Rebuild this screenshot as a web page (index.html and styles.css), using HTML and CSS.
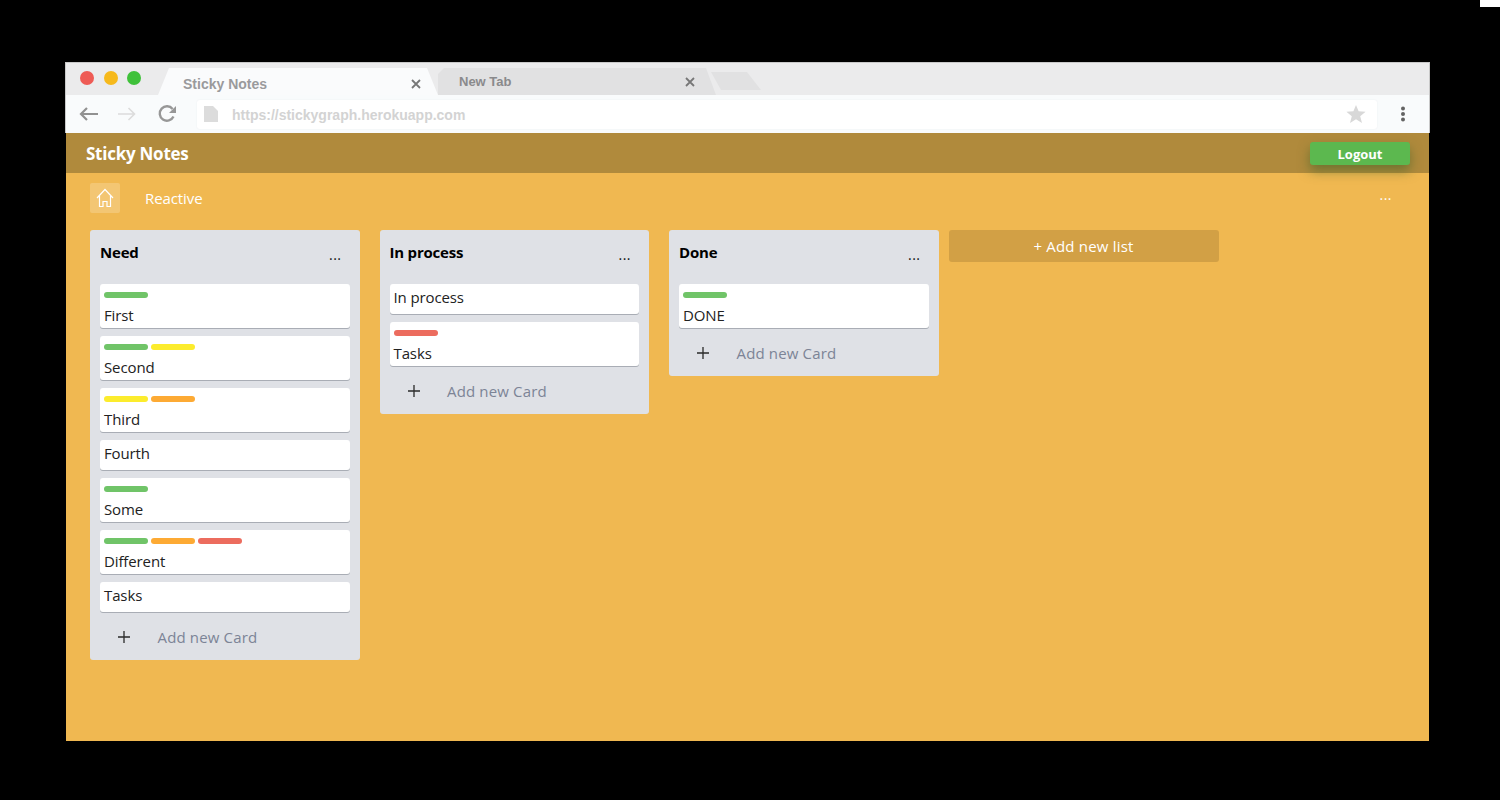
FILE: index.html
```html
<!DOCTYPE html>
<html lang="en">
<head>
<meta charset="utf-8">
<title>Sticky Notes</title>
<link rel="stylesheet" href="styles.css">
</head>
<body>
<div class="corner"></div>
<div class="window">
  <div class="tabstrip">
    <div class="lights"><i class="light red"></i><i class="light amber"></i><i class="light green"></i></div>
    <div class="tab tab-active"><span class="tab-title">Sticky Notes</span><svg class="tab-x" width="10" height="10" viewBox="0 0 10 10"><path d="M1 1l8 8M9 1l-8 8"/></svg></div>
    <div class="tab tab-idle"><span class="tab-title">New Tab</span><svg class="tab-x" width="10" height="10" viewBox="0 0 10 10"><path d="M1 1l8 8M9 1l-8 8"/></svg></div>
    <div class="tab-new"></div>
  </div>
  <div class="toolbar">
    <svg class="nav nav-back" width="20" height="16" viewBox="0 0 20 16"><path d="M19 8H2M8 2L2 8l6 6"/></svg>
    <svg class="nav nav-fwd" width="18" height="16" viewBox="0 0 18 16"><path d="M0 8h16.500M10.500 2l6 6-6 6"/></svg>
    <svg class="nav nav-reload" width="20" height="20" viewBox="0 0 20 20"><path d="M16.500 12.500A7.200 7.200 0 1 1 15.600 5"/><path class="fill" d="M19 2v7h-7z"/></svg>
    <div class="urlbar">
      <svg class="file" width="14" height="16" viewBox="0 0 14 16"><path d="M0 0h9l5 5v11H0z"/></svg>
      <span class="url">https://stickygraph.herokuapp.com</span>
      <svg class="star" width="20" height="18" viewBox="0 0 20 18"><path d="M10 0l2.600 6.300 7 .5-5.400 4.400 1.800 6.800L10 14.300l-6 3.700 1.800-6.800L.4 6.800l7-.5z"/></svg>
    </div>
    <svg class="kebab" width="6" height="16" viewBox="0 0 6 16"><circle cx="3" cy="2.500" r="2"/><circle cx="3" cy="8" r="2"/><circle cx="3" cy="13.500" r="2"/></svg>
  </div>
  <header class="appbar">
    <div class="brand">Sticky Notes</div>
    <button class="logout">Logout</button>
  </header>
  <main class="board">
    <div class="subbar">
      <div class="home"><svg width="18" height="20" viewBox="0 0 18 20"><path d="M1 10l8-8.500 8 8.500M3.500 8v10.500h3.500v-5h4v5h3.500V8"/></svg></div>
      <div class="board-name">Reactive</div>
      <div class="board-more">...</div>
    </div>
    <div class="columns">
      <section class="list">
        <div class="list-head"><h2>Need</h2><span class="more">...</span></div>
        <div class="card labeled"><div class="labels"><i class="lab g"></i></div><div class="txt">First</div></div>
        <div class="card labeled"><div class="labels"><i class="lab g"></i><i class="lab y"></i></div><div class="txt">Second</div></div>
        <div class="card labeled"><div class="labels"><i class="lab y"></i><i class="lab o"></i></div><div class="txt">Third</div></div>
        <div class="card"><div class="txt">Fourth</div></div>
        <div class="card labeled"><div class="labels"><i class="lab g"></i></div><div class="txt">Some</div></div>
        <div class="card labeled"><div class="labels"><i class="lab g"></i><i class="lab o"></i><i class="lab r"></i></div><div class="txt">Different</div></div>
        <div class="card"><div class="txt">Tasks</div></div>
        <div class="add-card"><svg width="14" height="14" viewBox="0 0 14 14"><path d="M7 1v12M1 7h12"/></svg><span>Add new Card</span></div>
      </section>
      <section class="list">
        <div class="list-head"><h2>In process</h2><span class="more">...</span></div>
        <div class="card"><div class="txt">In process</div></div>
        <div class="card labeled"><div class="labels"><i class="lab r"></i></div><div class="txt">Tasks</div></div>
        <div class="add-card"><svg width="14" height="14" viewBox="0 0 14 14"><path d="M7 1v12M1 7h12"/></svg><span>Add new Card</span></div>
      </section>
      <section class="list list-last">
        <div class="list-head"><h2>Done</h2><span class="more">...</span></div>
        <div class="card labeled"><div class="labels"><i class="lab g"></i></div><div class="txt">DONE</div></div>
        <div class="add-card"><svg width="14" height="14" viewBox="0 0 14 14"><path d="M7 1v12M1 7h12"/></svg><span>Add new Card</span></div>
      </section>
      <div class="add-list">+ Add new list</div>
    </div>
  </main>
</div>
</body>
</html>
```
FILE: styles.css
```css
* { box-sizing: border-box; }
html, body { margin: 0; height: 800px; overflow: hidden; }
body {
  background: #000;
  padding: 62px 70px 0 65px;
  font-family: "Open Sans", "Noto Sans", sans-serif;
  position: relative;
}
.corner { position: absolute; top: 0; right: 0; width: 20px; height: 7px; background: #fff; }
.window { width: 1365px; height: 679px; display: flex; flex-direction: column; }

.tabstrip {
  height: 33px;
  flex: none;
  display: flex;
  align-items: flex-end;
  background: #ebebec;
  border: 1px solid #c9c9c9;
  border-bottom: 0;
  position: relative;
}
.lights { display: flex; gap: 9.500px; width: 92px; height: 26px; padding: 1px 0 0 14px; flex: none; align-self: flex-start; margin-top: 7px; }
.light { width: 14px; height: 14px; border-radius: 50%; }
.red { background: #ee5b55; }
.amber { background: #f6b91c; }
.green { background: #3fc13a; }
.tab {
  height: 27px;
  display: flex;
  align-items: center;
  justify-content: space-between;
  flex: none;
}
.tab-active {
  width: 280px;
  background: #fafbfc;
  padding: 4px 17px 0 25px;
  clip-path: polygon(0 100%, 11px 0, 269px 0, 280px 100%);
  color: #9a9a9c;
  font: 700 14px "Liberation Sans", Arial, sans-serif;
}
.tab-idle {
  width: 278px;
  background: #e1e1e2;
  padding: 0 21px 0 21px;
  clip-path: polygon(0 100%, 0 6px, 6px 0, 268px 0, 278px 100%);
  color: #8a8a8c;
  font: 700 13px "Liberation Sans", Arial, sans-serif;
}
.tab-title { display: block; }
.tab-x { fill: none; stroke: #777; stroke-width: 1.800; }
.tab-new {
  width: 50px;
  height: 18px;
  margin: 0 0 5px -5px;
  background: #e1e1e2;
  clip-path: polygon(0 0, 36px 0, 50px 100%, 10px 100%);
}

.toolbar {
  height: 38px;
  flex: none;
  display: flex;
  align-items: center;
  background: #f9fbfc;
  border-left: 1px solid #c9c9c9;
  border-right: 1px solid #c9c9c9;
  padding-left: 13px;
}
.nav { fill: none; stroke-width: 2.200; flex: none; }
.nav-back { stroke: #919191; }
.nav-fwd { stroke: #dcdcdc; margin-left: 19px; stroke-width: 1.600; }
.nav-reload { stroke: #979797; margin-left: 21px; stroke-width: 2.400; }
.nav-reload .fill { fill: #979797; stroke: none; }
.urlbar {
  width: 1180px;
  height: 29px;
  margin-left: 20px;
  background: #fff;
  border-radius: 3px;
  box-shadow: 0 0 2px #eceef0;
  display: flex;
  align-items: center;
  padding: 0 11px 0 7px;
  flex: none;
}
.file { fill: #dcdcdc; flex: none; }
.url { font: 700 14px "Liberation Sans", Arial, sans-serif; color: #d3d3d3; margin-left: 14px; padding-top: 1px; flex: 1; }
.star { fill: #d8d8d8; flex: none; }
.kebab { fill: #636363; margin-left: 23px; flex: none; }

.appbar {
  height: 40px;
  flex: none;
  background: #b08a3c;
  display: flex;
  align-items: center;
  justify-content: space-between;
  padding: 0 19px 0 20px;
  margin: 0 1px;
}
.brand { color: #fff; font-size: 17px; font-weight: 700; letter-spacing: -0.25px; }
.logout {
  width: 100px;
  height: 23px;
  margin-top: 1px;
  border: 0;
  padding: 0;
  border-radius: 3px;
  background: #5cb84f;
  color: #fff;
  font: 700 13px "Open Sans", sans-serif;
  box-shadow: 0 6px 12px rgba(70, 100, 40, .6);
  position: relative;
}

.board { flex: 1; background: #f0b851; margin: 0 1px; padding: 10px 25px 0 24px; }
.subbar { height: 30px; display: flex; align-items: center; color: #fff; font-size: 15px; }
.home {
  width: 30px;
  height: 30px;
  background: rgba(255, 255, 255, .2);
  border-radius: 2px;
  display: flex;
  align-items: center;
  justify-content: center;
}
.home svg { fill: none; stroke: #fff; stroke-width: 1.200; }
.board-name { margin-left: 25px; letter-spacing: -0.1px; flex: 1; }
.board-more { margin: 0 12px 8px 0; letter-spacing: 0.5px; font-size: 14px; }

.columns { display: flex; align-items: flex-start; margin-top: 17px; }
.list {
  width: 269.500px;
  margin-right: 20px;
  padding: 0 10px;
  background: #dfe1e6;
  border-radius: 3px;
  flex: none;
}
.list-last { margin-right: 10px; }
.list-head { height: 54px; display: flex; align-items: flex-start; justify-content: space-between; padding-top: 11px; }
.list-head h2 { margin: 0; font-size: 15px; line-height: 22px; font-weight: 700; color: #000; letter-spacing: -0.2px; }
.more { font-size: 14px; line-height: 22px; color: #111; margin: 3px 8px 0 0; letter-spacing: 0.5px; }
.card {
  background: #fff;
  border-radius: 3px;
  box-shadow: 0 1px 0 #a9adb5;
  padding: 0 4px 4px;
  margin-bottom: 8px;
}
.labeled { padding: 8px 4px 0; }
.labels { height: 6px; margin-bottom: 4px; display: flex; gap: 3px; }
.lab { width: 44px; height: 6px; border-radius: 3px; }
.g { background: #70c468; }
.y { background: #fcec2d; }
.o { background: #fdaa34; }
.r { background: #ec6c5e; }
.txt { font-size: 15px; line-height: 26px; color: #222; letter-spacing: -0.12px; }
.add-card {
  height: 48px;
  margin-top: -8px;
  display: flex;
  align-items: center;
  padding: 2px 0 0 17px;
  color: #7c8496;
  font-size: 15px;
  letter-spacing: 0.15px;
}
.add-card svg { fill: none; stroke: #2a2a2a; stroke-width: 1.300; flex: none; }
.add-card span { margin-left: 26.500px; }
.add-list {
  width: 270px;
  height: 32px;
  background: #d2a045;
  border-radius: 3px;
  color: #fff;
  font-size: 15px;
  line-height: 32px;
  text-align: center;
  letter-spacing: 0.2px;
  flex: none;
}
```
